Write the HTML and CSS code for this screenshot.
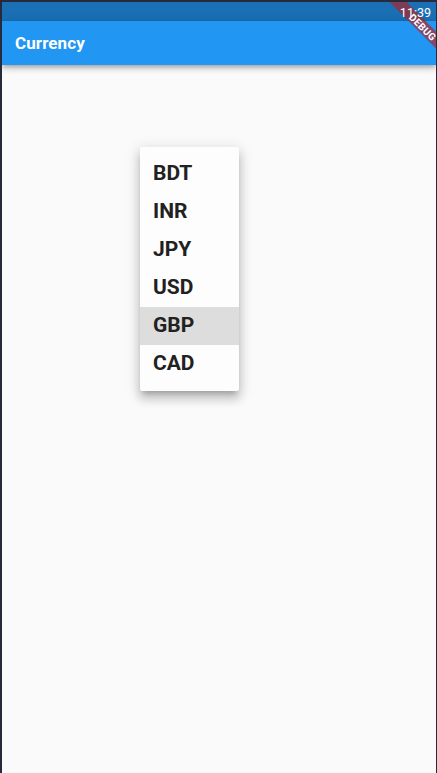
FILE: index.html
```html
<!DOCTYPE html>
<html>
<head>
<meta charset="utf-8">
<link rel="stylesheet" href="styles.css">
</head>
<body>
<div class="frame">
  <div class="screen">
    <div class="statusbar"><span class="time">11:39</span></div>
    <header class="appbar"><h1 class="title">Currency</h1></header>
    <main class="content"></main>
    <ul class="menu">
      <li class="item">BDT</li>
      <li class="item">INR</li>
      <li class="item">JPY</li>
      <li class="item">USD</li>
      <li class="item selected">GBP</li>
      <li class="item">CAD</li>
    </ul>
    <div class="banner"><span>DEBUG</span></div>
  </div>
</div>
</body>
</html>
```
FILE: styles.css
```css
html, body {
  margin: 0;
  padding: 0;
  height: 100%;
}
body {
  background: #272a3d;
  font-family: Roboto, "Noto Sans", Arial, sans-serif;
  overflow: hidden;
}
.frame {
  height: 773px;
  padding: 2px 1px 0 2px;
  box-sizing: border-box;
  display: flex;
}
.screen {
  position: relative;
  flex: 1;
  display: flex;
  flex-direction: column;
  background: #fafafa;
  overflow: hidden;
}
.statusbar {
  height: 19px;
  background: #1a6fb5;
  display: flex;
  justify-content: flex-end;
  align-items: center;
  padding-right: 5px;
}
.time {
  color: #ffffff;
  font-size: 12.5px;
  line-height: 1;
  margin-top: 3px;
  position: relative;
  z-index: 6;
}
.appbar {
  height: 44px;
  background: #2196f3;
  display: flex;
  align-items: center;
  padding-left: 13px;
  box-shadow: 0 2px 4px -1px rgba(0,0,0,.2), 0 4px 5px 0 rgba(0,0,0,.14), 0 1px 10px 0 rgba(0,0,0,.12);
  position: relative;
  z-index: 2;
}
.title {
  margin: 0;
  color: #ffffff;
  font-size: 17px;
  font-weight: 700;
  letter-spacing: 0.1px;
}
.content {
  flex: 1;
}
.menu {
  position: absolute;
  left: 138px;
  top: 145px;
  width: 99px;
  margin: 0;
  padding: 8px 0;
  list-style: none;
  background: #fdfdfd;
  border-radius: 2px;
  box-shadow: 0 5px 5px -3px rgba(0,0,0,.2), 0 8px 10px 1px rgba(0,0,0,.14), 0 3px 14px 2px rgba(0,0,0,.12);
  z-index: 4;
}
.item {
  height: 38px;
  box-sizing: border-box;
  padding-bottom: 3px;
  display: flex;
  align-items: center;
  padding-left: 13px;
  font-size: 21px;
  font-weight: 700;
  color: #212121;
}
.item.selected {
  background: #dddddd;
}
.banner {
  position: absolute;
  width: 120px;
  height: 12px;
  left: 361px;
  top: 19px;
  transform: rotate(45deg);
  background: rgba(183, 28, 28, 0.63);
  color: #ffffff;
  font-size: 10px;
  font-weight: 700;
  display: flex;
  align-items: center;
  justify-content: center;
  z-index: 4;
  letter-spacing: 0.3px;
}
```
